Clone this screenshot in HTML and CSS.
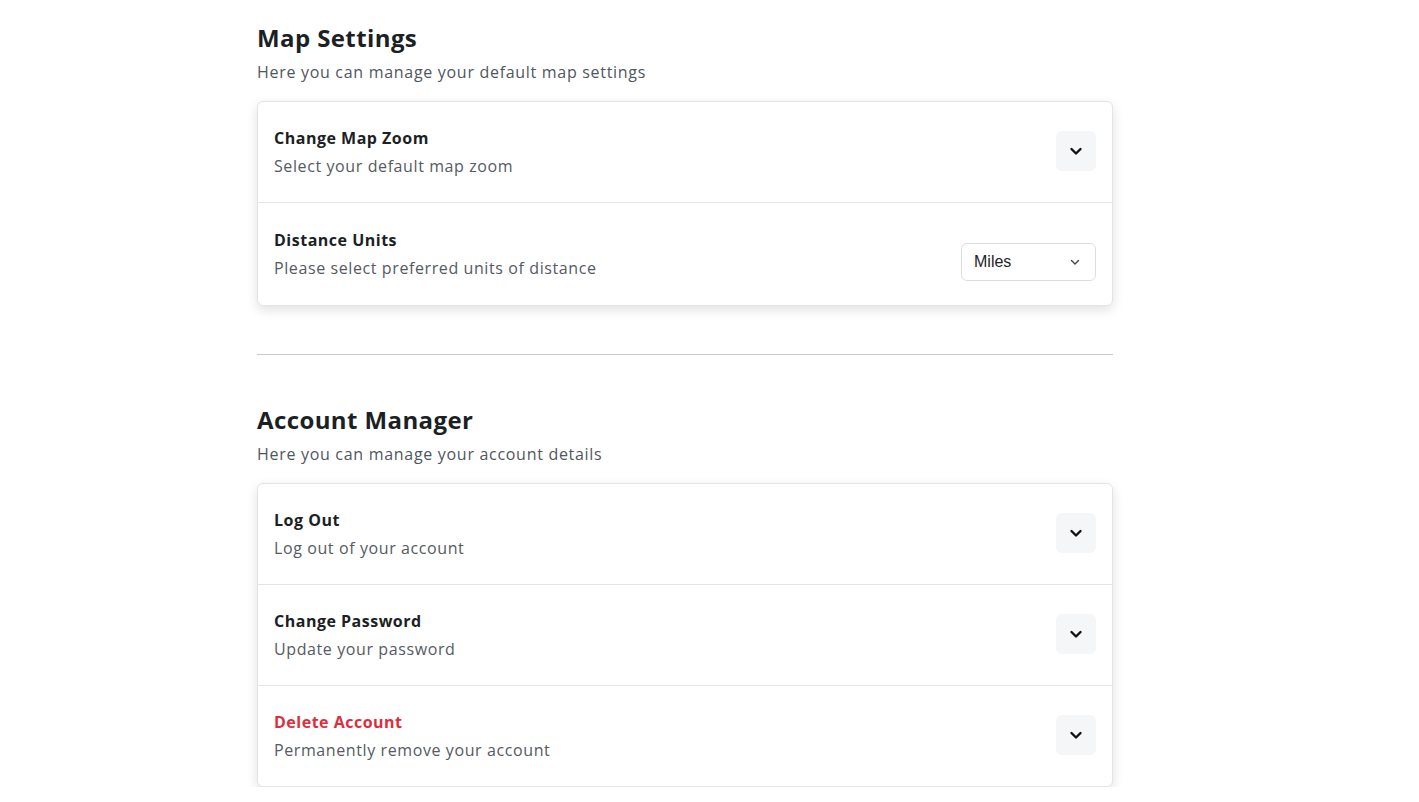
FILE: index.html
```html
<!DOCTYPE html>
<html lang="en">
<head>
<meta charset="utf-8">
<title>Settings</title>
<link rel="stylesheet" href="styles.css">
</head>
<body>
<main class="page">
  <section class="section">
    <h2 class="section-title">Map Settings</h2>
    <p class="section-sub">Here you can manage your default map settings</p>
    <div class="card">
      <div class="row">
        <div class="row-text">
          <div class="row-title">Change Map Zoom</div>
          <div class="row-desc">Select your default map zoom</div>
        </div>
        <button class="toggle" type="button" aria-label="Expand">
          <svg width="16" height="16" viewBox="0 0 16 16"><path d="M3.5 6 L8 10.5 L12.5 6" fill="none" stroke="#111" stroke-width="2.4" stroke-linecap="round" stroke-linejoin="round"/></svg>
        </button>
      </div>
      <div class="row">
        <div class="row-text">
          <div class="row-title">Distance Units</div>
          <div class="row-desc">Please select preferred units of distance</div>
        </div>
        <div class="select">
          <span>Miles</span>
          <svg width="12" height="12" viewBox="0 0 12 12"><path d="M2.5 4.5 L6 8 L9.5 4.5" fill="none" stroke="#444" stroke-width="1.4" stroke-linecap="round" stroke-linejoin="round"/></svg>
        </div>
      </div>
    </div>
  </section>

  <hr class="divider">

  <section class="section">
    <h2 class="section-title">Account Manager</h2>
    <p class="section-sub">Here you can manage your account details</p>
    <div class="card">
      <div class="row">
        <div class="row-text">
          <div class="row-title">Log Out</div>
          <div class="row-desc">Log out of your account</div>
        </div>
        <button class="toggle" type="button" aria-label="Expand">
          <svg width="16" height="16" viewBox="0 0 16 16"><path d="M3.5 6 L8 10.5 L12.5 6" fill="none" stroke="#111" stroke-width="2.4" stroke-linecap="round" stroke-linejoin="round"/></svg>
        </button>
      </div>
      <div class="row">
        <div class="row-text">
          <div class="row-title">Change Password</div>
          <div class="row-desc">Update your password</div>
        </div>
        <button class="toggle" type="button" aria-label="Expand">
          <svg width="16" height="16" viewBox="0 0 16 16"><path d="M3.5 6 L8 10.5 L12.5 6" fill="none" stroke="#111" stroke-width="2.4" stroke-linecap="round" stroke-linejoin="round"/></svg>
        </button>
      </div>
      <div class="row">
        <div class="row-text">
          <div class="row-title danger">Delete Account</div>
          <div class="row-desc">Permanently remove your account</div>
        </div>
        <button class="toggle" type="button" aria-label="Expand">
          <svg width="16" height="16" viewBox="0 0 16 16"><path d="M3.5 6 L8 10.5 L12.5 6" fill="none" stroke="#111" stroke-width="2.4" stroke-linecap="round" stroke-linejoin="round"/></svg>
        </button>
      </div>
    </div>
  </section>
</main>
</body>
</html>
```

FILE: styles.css
```css
* { box-sizing: border-box; }

html, body {
  margin: 0;
  padding: 0;
  background: #ffffff;
}

body {
  font-family: "Open Sans", "DejaVu Sans", sans-serif;
  color: #1c1f24;
}

.page {
  width: 856px;
  margin: 0 0 0 257px;
  padding-top: 22px;
}

.section-title {
  margin: 0;
  font-size: 24px;
  line-height: 32px;
  font-weight: 700;
  color: #1c1f24;
  letter-spacing: 0.4px;
}

.section-sub {
  margin: 6px 0 0;
  font-size: 16px;
  line-height: 24px;
  color: #505660;
  letter-spacing: 0.7px;
}

.card {
  margin-top: 17px;
  border: 1px solid #e3e4e7;
  border-radius: 6px;
  background: #fff;
  box-shadow: 0 4px 12px rgba(0, 0, 0, 0.12);
}

.row {
  display: flex;
  align-items: center;
  justify-content: space-between;
  padding: 24px 16px;
  border-top: 1px solid #e3e4e7;
}

.row:first-child {
  border-top: none;
}

.row-title {
  font-size: 16px;
  line-height: 24px;
  font-weight: 700;
  color: #1c1f24;
  letter-spacing: 0.5px;
}

.row-title.danger {
  color: #dc2e3c;
}

.row-desc {
  margin-top: 4px;
  font-size: 16px;
  line-height: 24px;
  color: #555a63;
  letter-spacing: 0.6px;
}

.toggle {
  width: 40px;
  height: 40px;
  border: none;
  border-radius: 6px;
  background: #f5f6f8;
  display: flex;
  align-items: center;
  justify-content: center;
  padding: 0;
  margin-top: -2px;
}

.select {
  width: 135px;
  height: 38px;
  border: 1px solid #dcdde1;
  border-radius: 6px;
  display: flex;
  align-items: center;
  justify-content: space-between;
  padding: 0 14px 0 12px;
  font-family: "Liberation Sans", Arial, sans-serif;
  font-size: 16px;
  color: #1f2328;
  margin-top: 16px;
}

.divider {
  margin: 48px 0 0;
  border: none;
  border-top: 1px solid #c9c9c9;
  height: 0;
  margin-bottom: 49px;
}
```
